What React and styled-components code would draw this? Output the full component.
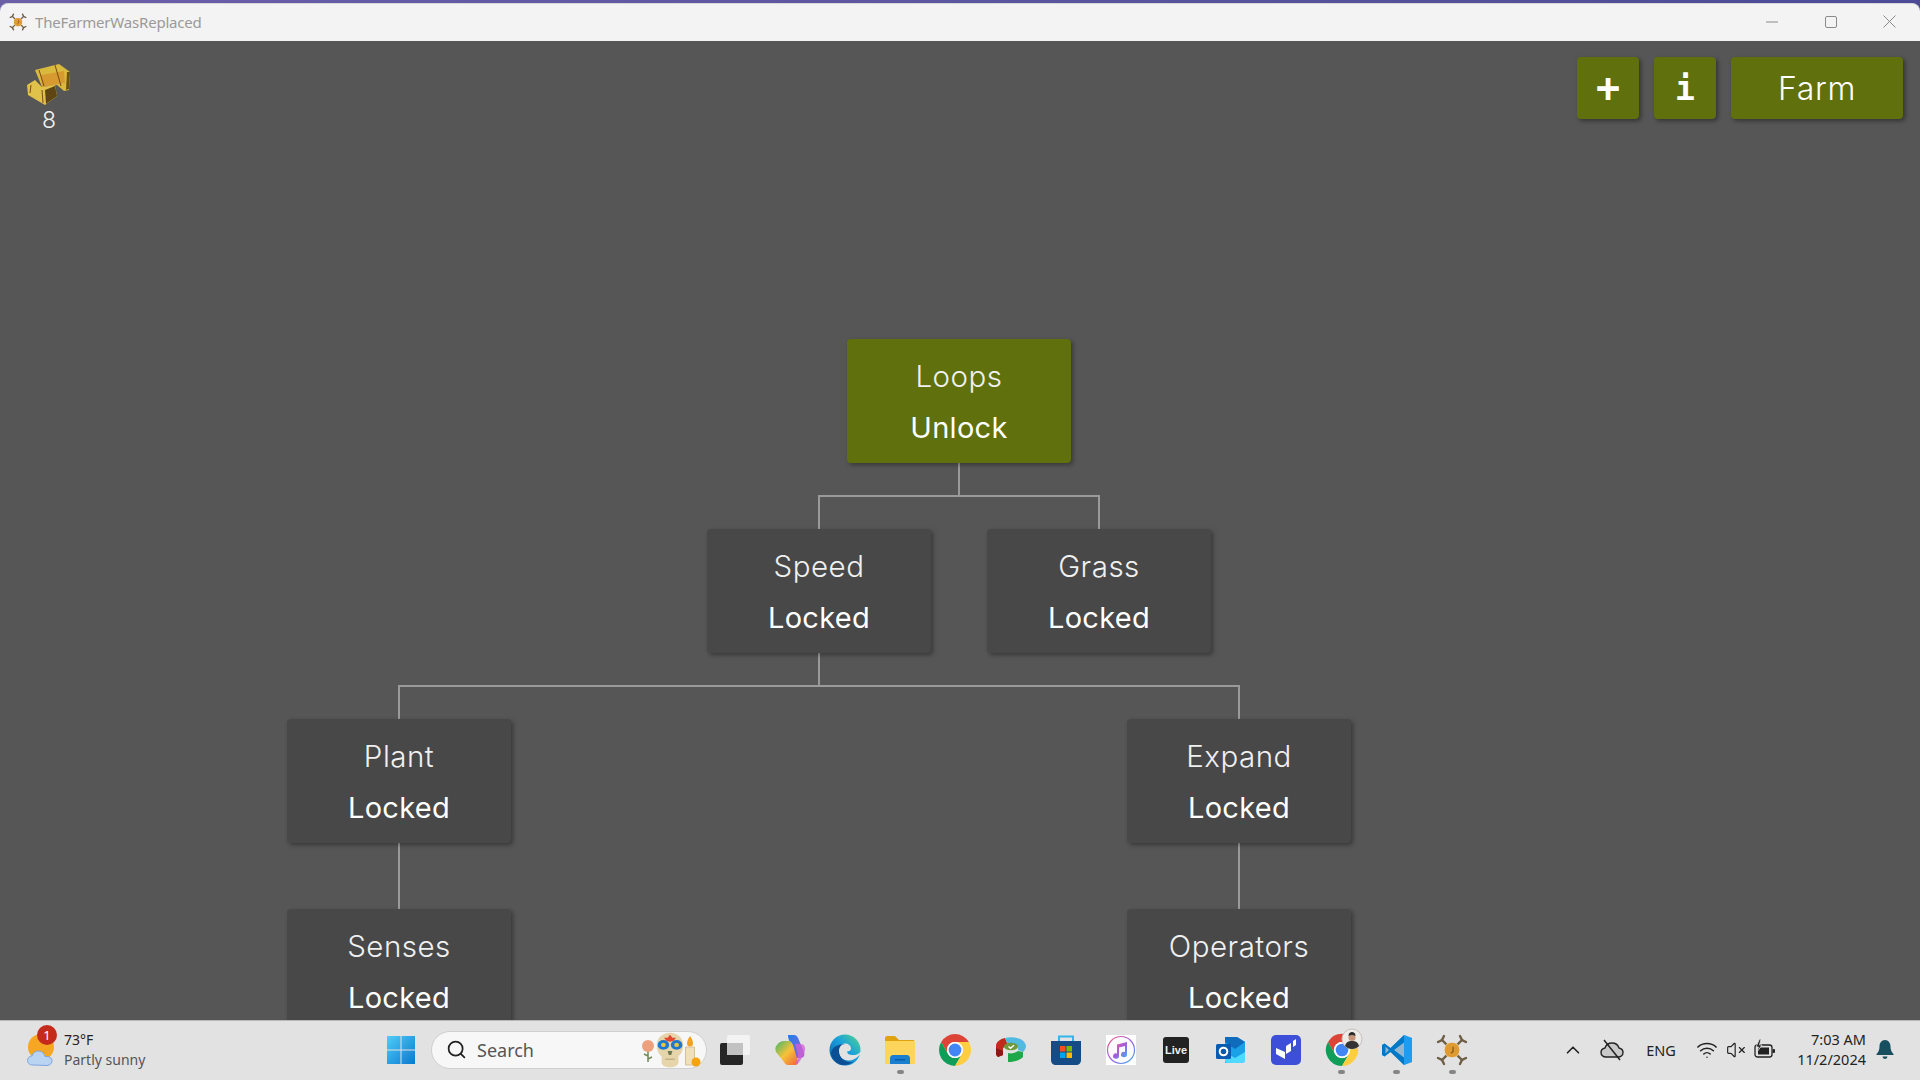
import React from "react";
import styled, { createGlobalStyle } from "styled-components";
import { ChevronUp, Search, VolumeX, Wifi } from "lucide-react";

const GlobalStyle = createGlobalStyle`
  html, body {
    margin: 0;
    padding: 0;
    background: #4d4b96;
  }
  * {
    box-sizing: border-box;
  }
`;

const GAME_FONT = `"Inter", "Noto Sans", sans-serif`;
const UI_FONT = `"Noto Sans", "Open Sans", sans-serif`;

const Screen = styled.div`
  width: 1920px;
  height: 1080px;
  display: flex;
  flex-direction: column;
  overflow: hidden;
  padding-top: 3px;
  background: linear-gradient(to right, #6b5fa8, #4d4b96);
`;

const TitleBar = styled.div`
  height: 38px;
  flex: none;
  display: flex;
  align-items: center;
  padding: 0 1px 2px 9px;
  background: #f3f3f3;
  border-top: 1px solid #d8d8d8;
  border-radius: 8px 8px 0 0;
`;

const TitleText = styled.span`
  margin-left: 8px;
  font: 400 15px ${UI_FONT};
  letter-spacing: -0.2px;
  color: #9a9a9a;
`;

const WindowButtons = styled.div`
  margin-left: auto;
  display: flex;
  align-items: center;
`;

const WindowButton = styled.div`
  width: 59px;
  height: 34px;
  display: flex;
  align-items: center;
  justify-content: center;
`;

const GameArea = styled.main`
  position: relative;
  flex: 1;
  overflow: hidden;
  background: #565656;
`;

const Hud = styled.div`
  position: relative;
  z-index: 2;
  display: flex;
  justify-content: space-between;
  align-items: flex-start;
  padding: 16px 17px 0 27px;
`;

const Resource = styled.div`
  width: 44px;
  margin-top: 6px;
  display: flex;
  flex-direction: column;
  align-items: center;
  color: #f2f2f2;
  font: 300 23px/28px ${GAME_FONT};
`;

const ActionRow = styled.div`
  display: flex;
  gap: 15px;
`;

const ActionButton = styled.button`
  width: ${(p) => p.$width || 62}px;
  height: 62px;
  border: none;
  border-radius: 4px;
  padding: 0;
  background: #60700c;
  color: #fff;
  box-shadow: 2px 2px 4px rgba(0, 0, 0, 0.4);
  font: ${(p) => (p.$glyph ? `700 ${p.$glyph}px "DejaVu Sans Mono", monospace` : `300 32px ${GAME_FONT}`)};
  letter-spacing: ${(p) => (p.$glyph ? 0 : 0.6)}px;
`;

const Tree = styled.div`
  position: absolute;
  inset: 0;
`;

const Wires = styled.svg`
  position: absolute;
  left: 0;
  top: 0;
`;

const NodeCard = styled.div`
  position: absolute;
  left: ${(p) => p.$x}px;
  top: ${(p) => p.$y}px;
  width: 224px;
  height: 124px;
  padding-top: 12px;
  border-radius: 4px;
  text-align: center;
  color: #fff;
  background: ${(p) => (p.$active ? "#60700c" : "#484848")};
  box-shadow: 2px 2px 4px rgba(0, 0, 0, 0.35);
`;

const NodeName = styled.div`
  font: 300 29.5px/51px ${GAME_FONT};
  letter-spacing: 0.5px;
  color: #f0f0f0;
`;

const NodeStatus = styled.div`
  font: 375 29px/51px ${GAME_FONT};
  letter-spacing: 0.3px;
`;

const Taskbar = styled.footer`
  height: 60px;
  flex: none;
  display: flex;
  align-items: center;
  padding-bottom: 2px;
  background: #e2e2e2;
  border-top: 1px solid #b8b8b8;
  font-family: ${UI_FONT};
`;

const WeatherWidget = styled.div`
  width: 373px;
  flex: none;
  display: flex;
  align-items: center;
  padding-left: 27px;
`;

const WeatherIconBox = styled.div`
  position: relative;
  width: 30px;
  height: 32px;
`;

const WeatherBadge = styled.span`
  position: absolute;
  left: 10px;
  top: -9px;
  width: 20px;
  height: 20px;
  border-radius: 50%;
  background: #c42b1c;
  color: #fff;
  font: 400 13px/20px ${UI_FONT};
  text-align: center;
`;

const WeatherText = styled.div`
  margin-left: 7px;
  font-size: 14px;
  line-height: 20px;
  color: #222;
`;

const WeatherSub = styled.div`
  color: #555;
`;

const StartSlot = styled.div`
  width: 58px;
  display: flex;
  justify-content: center;
  padding-right: 3px;
`;

const SearchBox = styled.div`
  width: 276px;
  height: 38px;
  flex: none;
  display: flex;
  align-items: center;
  padding: 0 4px 0 14px;
  border-radius: 19px;
  background: #f7f7f7;
  border: 1px solid #d0d0d0;
  color: #555;
  font-size: 18px;
`;

const SearchLabel = styled.span`
  margin-left: 10px;
  flex: 1;
`;

const TaskSlot = styled.div`
  position: relative;
  width: 55.2px;
  height: 58px;
  flex: none;
  display: flex;
  align-items: center;
  justify-content: center;
  &::after {
    content: "";
    display: ${(p) => (p.$running ? "block" : "none")};
    position: absolute;
    left: 50%;
    bottom: 4.5px;
    width: 7px;
    height: 4px;
    margin-left: -3.5px;
    border-radius: 2px;
    background: #858585;
  }
`;

const LiveIcon = styled.div`
  width: 26px;
  height: 26px;
  border-radius: 3px;
  background: #222;
  color: #f0f0f0;
  font: 700 11px/26px "Liberation Sans", sans-serif;
  text-align: center;
`;

const Tray = styled.div`
  margin-left: auto;
  display: flex;
  align-items: center;
  color: #222;
`;

const TrayItem = styled.div`
  width: ${(p) => p.$width}px;
  display: flex;
  justify-content: center;
  align-items: center;
  font-size: 14.5px;
`;

const Clock = styled.div`
  width: 83px;
  margin-bottom: 2px;
  text-align: right;
  font-size: 14.5px;
  line-height: 20px;
  color: #222;
  white-space: nowrap;
`;

const BellSlot = styled.div`
  width: 54px;
  display: flex;
  justify-content: center;
  padding-right: 16px;
`;

const DroneIcon = ({ size }) => (
  <svg width={size} height={size} viewBox="0 0 24 24" fill="none">
    <g stroke="#6e5f45" strokeWidth="1.8" strokeLinecap="round">
      <path d="M8 8 4.500 4.500M16 8l3.500-3.500M8 16l-3.500 3.500M16 16l3.500 3.500" />
      <path d="M1.500 6 4.500 4.500 6 1.500M22.500 6l-3-1.500L18 1.500M1.500 18l3 1.500 1.500 3M22.500 18l-3 1.500-1.500 3" />
    </g>
    <path fill="#e8cfa2" d="M6.500 9 9 6.500h6L17.500 9v6L15 17.500H9L6.500 15z" />
    <circle cx="12" cy="12" r="5.500" fill="#e09a32" />
    <path d="M12.800 9.500v3.800l-1.600 1" stroke="#8a5a16" strokeWidth="1" />
  </svg>
);

const HayIcon = () => (
  <svg width="44" height="43" viewBox="0 0 44 43">
    <path fill="#d9ba3f" d="M8 7 32 1l11 8-1 18-5 1-7-6-15 2z" />
    <path fill="#e0c24a" d="M0 22l8-5 7 7 13-2 2 11-12 9-17-10z" />
    <path fill="#d69a30" d="M14 12 37 8l1 12-23 4z" />
    <path fill="#6b5212" d="M40 9l3 0-1 17-3 1z" />
    <path fill="#5e4614" d="M18 27l10-4 2 10-11 8z" />
    <path fill="none" stroke="#7a4a10" strokeWidth="1" d="M12 7l5 16M28 2l6 21M4 22l-1 8M15 27l1 13" />
  </svg>
);

const WeatherIcon = () => (
  <svg width="30" height="32" viewBox="0 0 30 32">
    <circle cx="14" cy="13" r="13" fill="#f5a623" />
    <path fill="#b9d3f2" stroke="#7ea7dc" d="M6 31c-4 0-5.500-2.500-5.500-4.500 0-2.500 2-4.500 4.500-4.500 1-3.500 3.500-5 6.500-5 3.500 0 6 2.500 6.500 5.500h2c3 0 5 2 5 4.300 0 2.500-2 4.700-5 4.700z" />
  </svg>
);

const WindowsLogo = () => (
  <svg width="30" height="30" viewBox="0 0 30 30">
    <defs>
      <linearGradient id="winLogo" x1="0" y1="0" x2="1" y2="1">
        <stop offset="0" stopColor="#4fcdf7" />
        <stop offset="1" stopColor="#0a78d4" />
      </linearGradient>
    </defs>
    <path fill="url(#winLogo)" d="M1 1h13.500v13.500H1zM15.500 1H29v13.500H15.500zM1 15.500h13.500V29H1zM15.500 15.500H29V29H15.500z" />
  </svg>
);

const SkullDecoration = () => (
  <svg width="64" height="36" viewBox="0 0 64 36" overflow="visible">
    <path stroke="#6f8a55" strokeWidth="1.500" d="M10 18v12M10 24l-4-2M10 27l4-2" />
    <circle cx="10" cy="14" r="6" fill="#eda07c" />
    <g transform="translate(32 18) scale(1.2 1.02) translate(-33 -18)">
      <path fill="#e6d4aa" d="M22 13C22 5 28 1 33 1s11 4 11 12c0 6-2 9-4 11v6c0 3-3 5-7 5s-7-2-7-5v-6c-2-2-4-5-4-11z" />
      <circle cx="27.500" cy="13" r="4.800" fill="#1f78d0" />
      <circle cx="38.500" cy="13" r="4.800" fill="#1f78d0" />
      <circle cx="27.500" cy="13" r="2" fill="#e8c53a" />
      <circle cx="38.500" cy="13" r="2" fill="#e8c53a" />
      <path fill="#e0492f" d="M33 3l2 3 3 0-2 3-3 1-3-1-2-3 3 0z" />
      <path fill="#6b7a50" d="M31 19h4l-1 4h-2z" />
      <path stroke="#b4a27a" d="M29 27h8" />
    </g>
    <path fill="#efe0bb" stroke="#d4c098" d="M47.500 15h9v18h-9z" />
    <path fill="#f2a21b" d="M52 4c2 3 3 5 3 7.500a3 3 0 0 1-6 0c0-2.500 1-4.500 3-7.500z" />
    <circle cx="58" cy="30" r="4.500" fill="#f5a40f" />
  </svg>
);

const TaskViewIcon = () => (
  <svg width="32" height="32" viewBox="0 0 32 32">
    <rect x="1" y="9" width="23" height="22" rx="2" fill="#262626" />
    <rect x="8" y="1" width="23" height="20" rx="2" fill="#f4f4f4" fillOpacity="0.92" />
    <rect x="8" y="9" width="16" height="12" fill="#c2c2c2" />
  </svg>
);

const CopilotIcon = () => (
  <svg width="32" height="32" viewBox="0 0 32 32">
    <defs>
      <linearGradient id="copA" x1="0" y1="0" x2="1" y2="1">
        <stop offset="0" stopColor="#1b7fe8" />
        <stop offset="1" stopColor="#a35be0" />
      </linearGradient>
      <linearGradient id="copB" x1="0" y1="0" x2="1" y2="1">
        <stop offset="0" stopColor="#3fb66b" />
        <stop offset="0.5" stopColor="#f6c33a" />
        <stop offset="1" stopColor="#f0623a" />
      </linearGradient>
    </defs>
    <path fill="url(#copA)" d="M14 1h6c2 0 3 1 4 3l6 14c1 3 0 6-4 6h-6L15 6c-1-2-1-4-1-5z" />
    <path fill="url(#copB)" d="M10 7h5c2 0 3 2 4 4l5 17c.5 2-1 3-3 3h-7c-2 0-3-1-4-3L2 18c-1-3-1-5 1-7 1-2 4-4 7-4z" />
    <path fill="#d45fd0" fillOpacity="0.75" d="M21 10h6c3 0 4.500 3 4 6-.5 4-3 7-5 11-1 2-3 3-5 3 2-3 3-6 3-10z" />
  </svg>
);

const EdgeIcon = () => (
  <svg width="32" height="32" viewBox="0 0 32 32">
    <defs>
      <linearGradient id="edgeA" x1="0" y1="1" x2="1" y2="0">
        <stop offset="0" stopColor="#0b57a0" />
        <stop offset="0.55" stopColor="#1aa0dc" />
        <stop offset="1" stopColor="#52d88a" />
      </linearGradient>
    </defs>
    <circle cx="16" cy="16" r="15.500" fill="url(#edgeA)" />
    <path fill="#e2e2e2" d="M31.500 17c-.5 2-3 4-7 4-4.500 0-6-1-6.500-3.500 2.500 0 4-1 4-3 0-3-3-5-6-5-4 0-6.500 3-6.500 7 0 6 4.500 10 9.500 10 5 0 8-2 12-6 .4-1 .5-2 .5-3.500z" />
    <path fill="#0b4f95" d="M10 17c0-4 2.500-7 6-7-5 0-13 2-14 9 .5 6 6 12 13 12 3 0 6-1 8.500-3-6 1-13.500-3-13.500-11z" />
  </svg>
);

const FolderIcon = () => (
  <svg width="32" height="32" viewBox="0 0 32 32">
    <path fill="#e0a30f" d="M1 4c0-1 1-2 2-2h8l4 4h15v6H1z" />
    <path fill="#fdd55a" d="M1 7h30v22c0 .5-.5 1-1 1H2c-.5 0-1-.5-1-1z" />
    <path fill="#1a7fd0" d="M6 30v-6c0-1 1-3 3-3h14c2 0 3 2 3 3v6z" />
    <path fill="#0b5ca8" d="M11 25h10v1.500H11z" />
  </svg>
);

const ChromeIcon = () => (
  <svg width="32" height="32" viewBox="4 4 40 40">
    <path fill="#db4437" d="M24 14H41.300A20 20 0 0 0 6.700 14L15.300 29A10 10 0 0 1 24 14z" />
    <path fill="#0f9d58" d="M6.700 14A20 20 0 0 0 24 44L32.700 29A10 10 0 0 1 15.300 29z" />
    <path fill="#ffcd40" d="M41.300 14H24A10 10 0 0 1 32.700 29L24 44A20 20 0 0 0 41.300 14z" />
    <circle cx="24" cy="24" r="10" fill="#fff" />
    <circle cx="24" cy="24" r="8" fill="#4285f4" />
  </svg>
);

const ChromeProfileIcon = () => (
  <svg width="32" height="32" viewBox="0 0 32 32" overflow="visible">
    <path fill="#db4437" d="M16 8H30A16 16 0 0 0 2 8L9 20A8 8 0 0 1 16 8z" />
    <path fill="#0f9d58" d="M2 8A16 16 0 0 0 16 32L23 20A8 8 0 0 1 9 20z" />
    <path fill="#ffcd40" d="M30 8H16A8 8 0 0 1 23 20L16 32A16 16 0 0 0 30 8z" />
    <circle cx="16" cy="16" r="8" fill="#fff" />
    <circle cx="16" cy="16" r="6.300" fill="#4285f4" />
    <circle cx="26" cy="5" r="10" fill="#ecebe6" stroke="#c7bfc0" />
    <circle cx="26" cy="3.500" r="3.500" fill="#c4937a" />
    <path fill="#2c2c2c" d="M22.500 2c0-3 1.500-4 3.500-4s3.500 1 3.500 4c-2-1.500-5-1.500-7 0z" />
    <path fill="#333" d="M19 12c1-4 3.500-5 7-5s6 1 7 5c-2 2-4.500 3-7 3s-5-1-7-3z" />
  </svg>
);

const RingAppIcon = () => (
  <svg width="32" height="26" viewBox="0 0 32 26">
    <path fill="#c22a1e" d="M1 9c0-4 4-7 9-8l3 7-5 3v7l-5 2c-1-1-2-2-2-3z" />
    <path fill="#8d1712" d="M3 20l5-2v-4L1 11v6c0 1 1 2 2 3z" />
    <path fill="#52b9e0" d="M10 1c8-2 20 0 21 8 0 2-1 4-3 6l-5-2v-3c0-2-5-3-10-2z" />
    <path fill="#1fa849" d="M13 16c3 1 7 0 10-2l5 1v5c-3 3-8 5-15 5z" />
    <ellipse cx="16" cy="9.500" rx="7" ry="3.800" fill="#6f9a3b" />
    <path fill="none" stroke="#fff" strokeWidth="1.400" d="M13.500 9.500l2 1.800 3.500-3" />
  </svg>
);

const StoreIcon = () => (
  <svg width="30" height="32" viewBox="0 0 30 32">
    <path fill="none" stroke="#2fb6ec" strokeWidth="2" d="M8 7V2.500h14V7" />
    <path fill="#164c86" d="M0 7h30v19c0 3-2 5-5 5H5c-3 0-5-2-5-5z" />
    <path fill="#f25022" d="M9 12h5.500v5.500H9z" />
    <path fill="#7fba00" d="M15.500 12H21v5.500h-5.500z" />
    <path fill="#00a4ef" d="M9 18.500h5.500V24H9z" />
    <path fill="#ffb900" d="M15.500 18.500H21V24h-5.500z" />
  </svg>
);

const MusicIcon = () => (
  <svg width="30" height="30" viewBox="0 0 30 30">
    <defs>
      <linearGradient id="musicRing" x1="0" y1="0" x2="1" y2="1">
        <stop offset="0" stopColor="#f2617c" />
        <stop offset="0.5" stopColor="#a35be0" />
        <stop offset="1" stopColor="#39b6f0" />
      </linearGradient>
    </defs>
    <rect width="30" height="30" fill="#fff" />
    <circle cx="15" cy="15" r="13.500" fill="#fbfbfd" stroke="url(#musicRing)" strokeWidth="1.200" />
    <path fill="url(#musicRing)" d="M11 9.500 21 7v12.500a3 2.600 0 1 1-2-2.400V11l-6 1.500V21a3 2.600 0 1 1-2-2.400z" />
  </svg>
);

const OutlookIcon = () => (
  <svg width="30" height="30" viewBox="0 0 30 30">
    <path fill="#1aa0e6" d="M9 2h12l8 5v14l-8 7H9z" />
    <path fill="#0f6cbd" d="M9 2h12l8 5-10 7-10-7z" />
    <path fill="#50d9ff" d="M9 17l10 6 10-6v9c0 1-1 2-2 2H11c-1 0-2-1-2-2z" />
    <rect y="9" width="15" height="15" rx="1.500" fill="#0a5bb0" />
    <circle cx="7.500" cy="16.500" r="3.800" fill="none" stroke="#fff" strokeWidth="2" />
  </svg>
);

const ShardsIcon = () => (
  <svg width="30" height="30" viewBox="0 0 30 30">
    <rect width="30" height="30" rx="5" fill="#3d4fd8" />
    <path fill="#fff" d="M5 13l9 4v7l-9-5zM15 11l5-3v8l-5 3zM22 6l3-2v6l-3 2z" />
  </svg>
);

const VsCodeIcon = () => (
  <svg width="32" height="32" viewBox="0 0 32 32">
    <path fill="#0065a9" d="M23 1 9.500 14 3.500 9.500 1 11v10l2.500 1.500 6-4.500L23 31l8-3V4z" opacity="0.35" />
    <path fill="#1f9cf0" d="M23 1l8 3v24l-8 3z" />
    <path fill="#0078c8" d="M23 1v7.500L13 16l10 7.500V31L9.500 18l-6 4.500L1 21V11l2.500-1.500 6 4.500zM4.500 12.500v7L8 16z" />
  </svg>
);

const CloudOffIcon = () => (
  <svg width="24" height="22" viewBox="0 0 24 22" fill="none">
    <path fill="#c9c9c9" stroke="#222" strokeWidth="1.400" d="M6 18c-3 0-5-2-5-4.500 0-2 1.500-4 4-4.500 1-3 3.500-5 7-5 3 0 6 2 7 5 2.500.5 4 2 4 4.500S21 18 18 18z" />
    <path stroke="#222" strokeWidth="1.500" d="M4 1l16 20" />
  </svg>
);

const BatteryIcon = () => (
  <svg width="22" height="22" viewBox="0 0 22 22" fill="none">
    <rect x="1" y="6" width="17" height="12" rx="2.500" stroke="#222" strokeWidth="1.300" />
    <rect x="4" y="8.500" width="11" height="7" fill="#222" />
    <rect x="18.500" y="10" width="2.500" height="4" rx="1" fill="#222" />
    <path fill="#222" stroke="#e2e2e2" strokeWidth="0.800" d="M5.500 0 2 8h2.500L3 13l5-7H5.500L7 0z" />
  </svg>
);

const BellIcon = () => (
  <svg width="18" height="20" viewBox="0 0 18 20">
    <path fill="#174f5f" d="M9 0c3.500 0 5.500 3 5.500 6.500 0 3 1 5.500 3 7.500v1H.5v-1c2-2 3-4.500 3-7.500C3.500 3 5.500 0 9 0z" />
    <path fill="#174f5f" d="M6.500 16.500h5a2.500 2.500 0 0 1-5 0z" />
  </svg>
);

const nodes = [
  { name: "Loops", status: "Unlock", x: 847, y: 298, active: true },
  { name: "Speed", status: "Locked", x: 707, y: 488 },
  { name: "Grass", status: "Locked", x: 987, y: 488 },
  { name: "Plant", status: "Locked", x: 287, y: 678 },
  { name: "Expand", status: "Locked", x: 1127, y: 678 },
  { name: "Senses", status: "Locked", x: 287, y: 868 },
  { name: "Operators", status: "Locked", x: 1127, y: 868 },
];

const wires = [
  "M959 422V455M819 488V455H1099V488",
  "M819 612V645M399 678V645H1239V678",
  "M399 802V868",
  "M1239 802V868",
];

const taskItems = [
  { icon: <TaskViewIcon /> },
  { icon: <CopilotIcon /> },
  { icon: <EdgeIcon /> },
  { icon: <FolderIcon />, running: true },
  { icon: <ChromeIcon /> },
  { icon: <RingAppIcon /> },
  { icon: <StoreIcon /> },
  { icon: <MusicIcon /> },
  { icon: <LiveIcon>Live</LiveIcon> },
  { icon: <OutlookIcon /> },
  { icon: <ShardsIcon /> },
  { icon: <ChromeProfileIcon />, running: true },
  { icon: <VsCodeIcon />, running: true },
  { icon: <DroneIcon size={32} />, running: true },
];

export default function App() {
  return (
    <Screen>
      <GlobalStyle />
      <TitleBar>
        <DroneIcon size={18} />
        <TitleText>TheFarmerWasReplaced</TitleText>
        <WindowButtons>
          <WindowButton>
            <svg width="12" height="12" viewBox="0 0 12 12">
              <path d="M0 6h12" stroke="#8a8a8a" />
            </svg>
          </WindowButton>
          <WindowButton>
            <svg width="12" height="12" viewBox="0 0 12 12" fill="none">
              <rect x="0.500" y="0.500" width="11" height="11" rx="1.500" stroke="#8a8a8a" />
            </svg>
          </WindowButton>
          <WindowButton>
            <svg width="13" height="13" viewBox="0 0 13 13">
              <path d="M.5.5l12 12M12.500.5l-12 12" stroke="#8a8a8a" />
            </svg>
          </WindowButton>
        </WindowButtons>
      </TitleBar>

      <GameArea>
        <Hud>
          <Resource>
            <HayIcon />
            8
          </Resource>
          <ActionRow>
            <ActionButton $glyph={40}>+</ActionButton>
            <ActionButton $glyph={33}>i</ActionButton>
            <ActionButton $width={172}>Farm</ActionButton>
          </ActionRow>
        </Hud>
        <Tree>
          <Wires width="1920" height="979" fill="none" stroke="#9a9a9a" strokeWidth="2">
            {wires.map((d) => (
              <path key={d} d={d} />
            ))}
          </Wires>
          {nodes.map((node) => (
            <NodeCard key={node.name} $x={node.x} $y={node.y} $active={node.active}>
              <NodeName>{node.name}</NodeName>
              <NodeStatus>{node.status}</NodeStatus>
            </NodeCard>
          ))}
        </Tree>
      </GameArea>

      <Taskbar>
        <WeatherWidget>
          <WeatherIconBox>
            <WeatherIcon />
            <WeatherBadge>1</WeatherBadge>
          </WeatherIconBox>
          <WeatherText>
            73°F
            <WeatherSub>Partly sunny</WeatherSub>
          </WeatherText>
        </WeatherWidget>
        <StartSlot>
          <WindowsLogo />
        </StartSlot>
        <SearchBox>
          <Search size={21} color="#222" strokeWidth={2} />
          <SearchLabel>Search</SearchLabel>
          <SkullDecoration />
        </SearchBox>
        {taskItems.map((item, i) => (
          <TaskSlot key={i} $running={item.running}>
            {item.icon}
          </TaskSlot>
        ))}
        <Tray>
          <TrayItem $width={36}>
            <ChevronUp size={22} strokeWidth={1.8} />
          </TrayItem>
          <TrayItem $width={42}>
            <CloudOffIcon />
          </TrayItem>
          <TrayItem $width={56}>ENG</TrayItem>
          <TrayItem $width={36}>
            <Wifi size={22} strokeWidth={1.6} />
          </TrayItem>
          <TrayItem $width={22}>
            <VolumeX size={20} strokeWidth={1.4} />
          </TrayItem>
          <TrayItem $width={36}>
            <BatteryIcon />
          </TrayItem>
          <Clock>
            7:03 AM
            <br />
            11/2/2024
          </Clock>
          <BellSlot>
            <BellIcon />
          </BellSlot>
        </Tray>
      </Taskbar>
    </Screen>
  );
}
